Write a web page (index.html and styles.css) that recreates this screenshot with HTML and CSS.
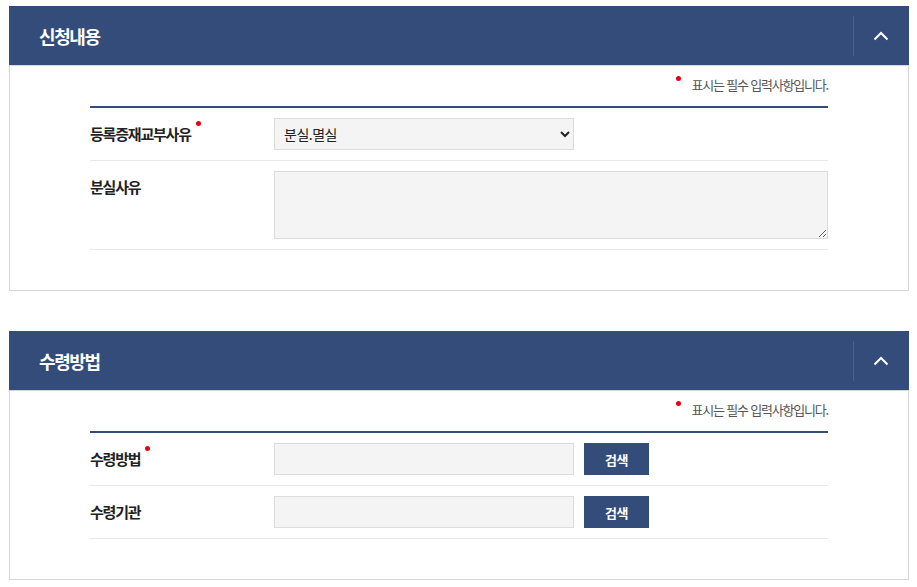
FILE: index.html
```html
<!DOCTYPE html>
<html lang="ko">
<head>
<meta charset="utf-8">
<title>신청내용</title>
<link rel="stylesheet" href="styles.css">
</head>
<body>
<section class="panel">
  <div class="panel-head">
    <h2 class="panel-title">신청내용</h2>
    <button class="toggle" type="button" aria-label="접기">
      <svg width="16" height="10" viewBox="0 0 16 10"><path d="M1.5 8.5 L8 2 L14.5 8.5" fill="none" stroke="#fff" stroke-width="2"/></svg>
    </button>
  </div>
  <div class="panel-body">
    <p class="note"><span class="dot note-dot"></span>표시는 필수 입력사항입니다.</p>
    <div class="form">
      <div class="row">
        <div class="label">등록증재교부사유<span class="dot"></span></div>
        <div class="field">
          <select class="select">
            <option>분실.멸실</option>
          </select>
        </div>
      </div>
      <div class="row">
        <div class="label">분실사유</div>
        <div class="field field-full">
          <textarea class="textarea"></textarea>
        </div>
      </div>
    </div>
  </div>
</section>

<section class="panel">
  <div class="panel-head">
    <h2 class="panel-title">수령방법</h2>
    <button class="toggle" type="button" aria-label="접기">
      <svg width="16" height="10" viewBox="0 0 16 10"><path d="M1.5 8.5 L8 2 L14.5 8.5" fill="none" stroke="#fff" stroke-width="2"/></svg>
    </button>
  </div>
  <div class="panel-body">
    <p class="note"><span class="dot note-dot"></span>표시는 필수 입력사항입니다.</p>
    <div class="form">
      <div class="row">
        <div class="label">수령방법<span class="dot"></span></div>
        <div class="field">
          <input class="input" type="text">
          <button class="btn" type="button">검색</button>
        </div>
      </div>
      <div class="row">
        <div class="label">수령기관</div>
        <div class="field">
          <input class="input" type="text">
          <button class="btn" type="button">검색</button>
        </div>
      </div>
    </div>
  </div>
</section>
</body>
</html>
```

FILE: styles.css
```css
* { box-sizing: border-box; }

body {
  margin: 0;
  padding: 6px 8px 0 9px;
  background: #fff;
  font-family: "Noto Sans CJK KR", "Noto Sans", sans-serif;
  color: #222;
}

.panel {
  width: 900px;
}

.panel + .panel {
  margin-top: 40px;
}

.panel-head {
  height: 59px;
  background: #344c79;
  display: flex;
  align-items: center;
  justify-content: space-between;
  padding-left: 30px;
}

.panel-title {
  margin: 0;
  font-size: 18px;
  font-weight: 700;
  letter-spacing: -1.4px;
  color: #fff;
  line-height: 1;
}

.toggle {
  width: 56px;
  height: 40px;
  border: 0;
  border-left: 1px solid rgba(255, 255, 255, 0.12);
  background: transparent;
  padding: 0;
  display: flex;
  align-items: center;
  justify-content: center;
  cursor: pointer;
}

.toggle svg { display: block; margin: 1px 2px 0 0; }

.panel-body {
  border: 1px solid #d6d6d6;
  padding: 9px 80px 40px;
}

.note {
  margin: 0 0 11px;
  text-align: right;
  font-size: 13px;
  line-height: 20px;
  letter-spacing: -1.2px;
  color: #555;
}

.dot {
  display: inline-block;
  width: 5px;
  height: 5px;
  border-radius: 50%;
  background: #e60012;
  vertical-align: top;
  margin: 3px 0 0 5px;
}

.note-dot {
  margin: 1px 11px 0 0;
}

.form {
  border-top: 2px solid #344c79;
}

.row {
  display: flex;
  align-items: flex-start;
  padding: 10px 0;
  border-bottom: 1px solid #e8e8e8;
}

.label {
  width: 184px;
  flex: none;
  font-size: 15px;
  font-weight: 700;
  letter-spacing: -1.2px;
  line-height: 32px;
  color: #222;
}

.field {
  display: flex;
  gap: 10px;
  flex: 1;
}

.select,
.input {
  width: 300px;
  height: 32px;
  border: 1px solid #dcdcdc;
  background-color: #f4f4f4;
  font-family: inherit;
  font-size: 14px;
  letter-spacing: -0.5px;
  color: #222;
  padding: 0 5px;
  margin: 0;
  border-radius: 0;
}

.textarea {
  display: block;
  width: 100%;
  height: 68px;
  border: 1px solid #dcdcdc;
  background: #f4f4f4;
  margin: 0;
  font-family: inherit;
  font-size: 14px;
  border-radius: 0;
}

.btn {
  width: 65px;
  height: 32px;
  border: 0;
  background: #344c79;
  color: #fff;
  font-family: inherit;
  font-size: 13px;
  font-weight: 700;
  letter-spacing: -0.5px;
  padding: 0;
  cursor: pointer;
}
```
